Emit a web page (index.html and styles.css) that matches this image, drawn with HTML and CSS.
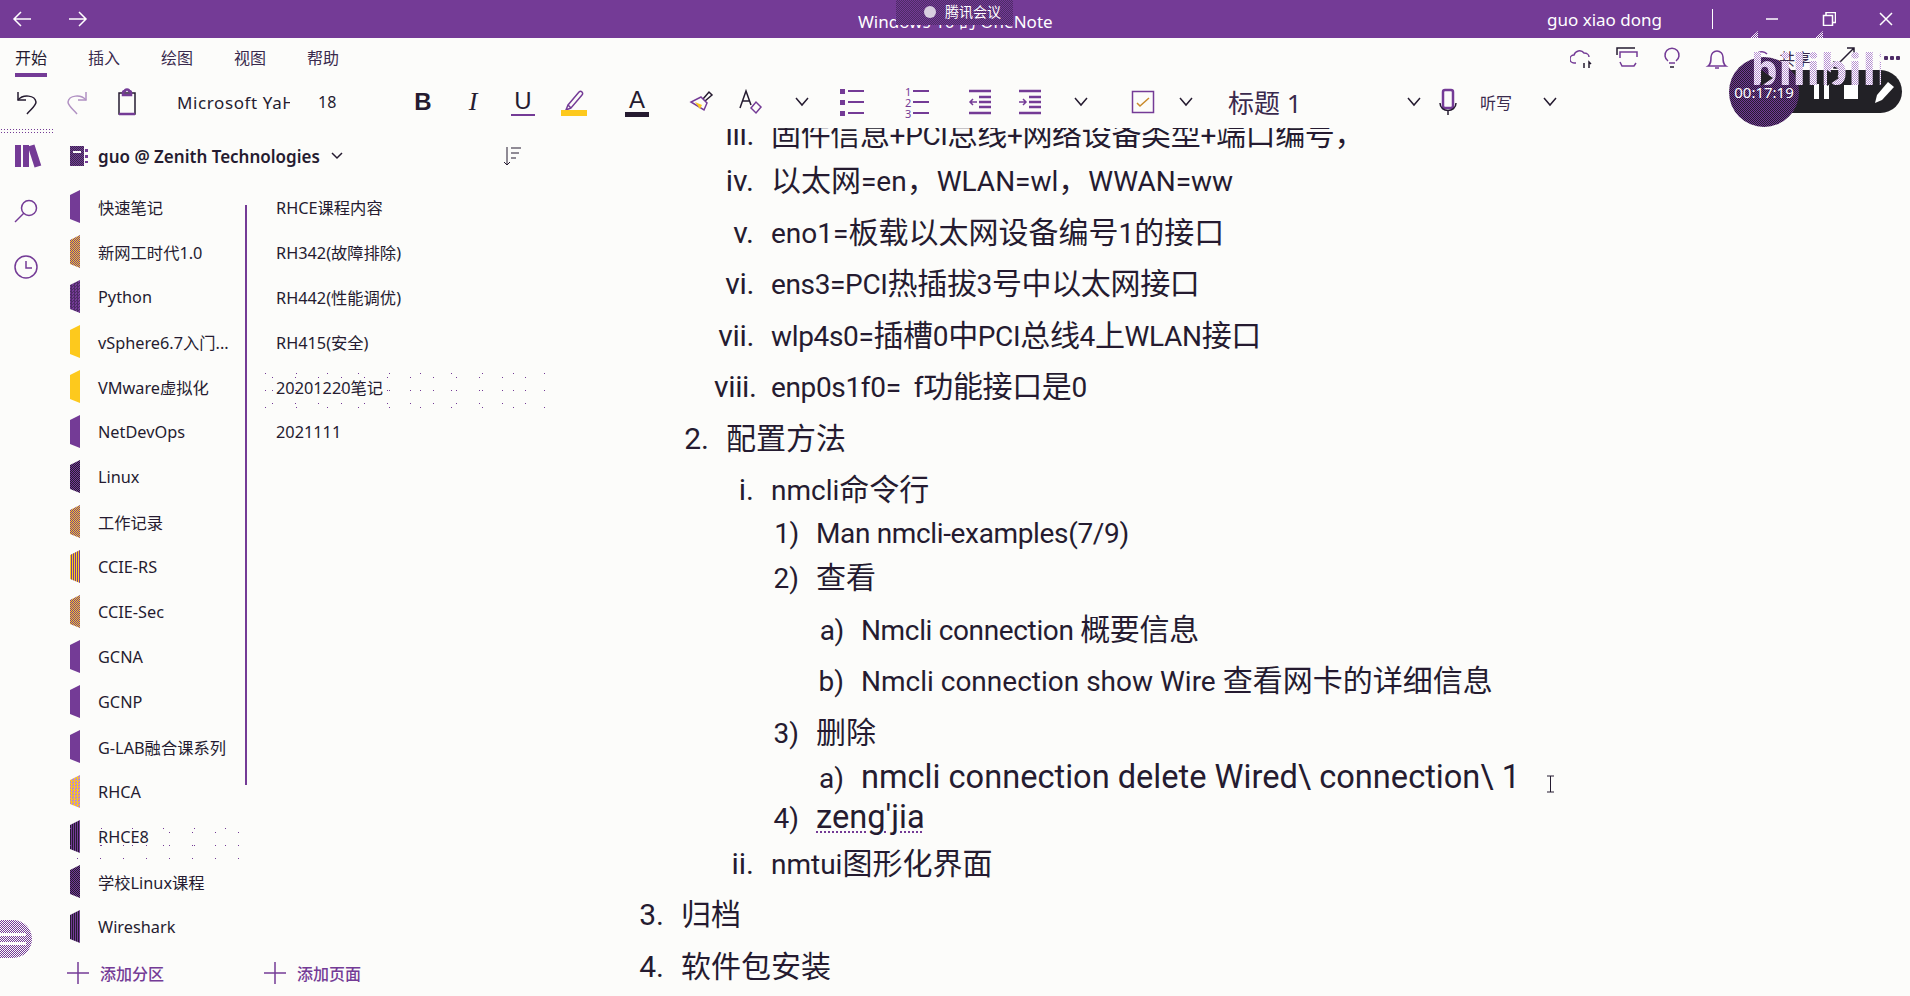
FILE: index.html
```html
<!DOCTYPE html>
<html lang="zh-CN">
<head>
  <meta charset="UTF-8">
  <title>Windows 10 的 OneNote</title>
  <link rel="stylesheet" href="styles.css">
</head>
<body>
  <header class="titlebar">
    <div class="nav-arrows">
      <svg width="24" height="20" viewBox="0 0 24 20"><path d="M20 10H3M10 3l-7 7 7 7"/></svg>
      <svg width="24" height="20" viewBox="0 0 24 20"><path d="M3 10h17M13 3l7 7-7 7"/></svg>
    </div>
    <div class="app-title">Windows 10 的 OneNote</div>
    <div class="user">guo xiao dong</div>
    <div class="sep"></div>
    <div class="win-btns">
      <svg width="14" height="14" viewBox="0 0 14 14"><path d="M1 7h12"/></svg>
      <svg width="14" height="14" viewBox="0 0 14 14"><path d="M1.5 3.5h9v10h-9zM4 3.5V.5h9.5v10h-3"/></svg>
      <svg width="14" height="14" viewBox="0 0 14 14"><path d="M1 1l12 12M13 1L1 13"/></svg>
    </div>
    <div class="meeting"><span class="meeting-dot"></span>腾讯会议</div>
  </header>

  <div class="tabs">
    <a class="tab active">开始</a>
    <a class="tab">插入</a>
    <a class="tab">绘图</a>
    <a class="tab">视图</a>
    <a class="tab">帮助</a>
    <div class="tab-icons">
      <svg class="ic" width="24" height="24" viewBox="0 0 24 24"><path d="M6 17H4a4 4 0 0 1 0-8c1-4 7-6 10-2 3 0 5 2 5 4"/><path class="dk" d="M14 22v-5M19 22v-6l2 2"/></svg>
      <svg class="ic" width="24" height="24" viewBox="0 0 24 24"><path class="dk" d="M2 9V2h18"/><path d="M5 12V6h17v5M5 16l2 4h12l2-3"/></svg>
      <svg class="ic" width="24" height="24" viewBox="0 0 24 24"><path d="M8 15a7 7 0 1 1 8 0M9 17h6"/><path class="dk" d="M10 21h4"/></svg>
      <svg class="ic" width="24" height="24" viewBox="0 0 24 24"><path d="M3 20c3-2 3-5 3-9a6 6 0 0 1 12 0c0 4 0 7 3 9zM10 22h4"/></svg>
      <svg class="ic" width="24" height="24" viewBox="0 0 24 24"><path d="M5 20V11a7 7 0 0 1 12-3"/></svg>
      <span class="share">共享</span>
      <svg class="ic" width="24" height="24" viewBox="0 0 24 24"><path class="dk" d="M2 22L22 2M15 2h7v7M2 15v7h7"/></svg>
      <span class="more"></span>
    </div>
  </div>

  <div class="toolbar">
    <svg class="btn" width="24" height="26" viewBox="0 0 24 26"><path class="dk" d="M3 3v8h8"/><path class="dk" d="M3 11c5-6 17-5 18 2 0 4-6 8-9 12"/></svg>
    <svg class="btn faint" width="24" height="26" viewBox="0 0 24 26"><path d="M21 3v8h-8"/><path d="M21 11C16 5 4 6 3 13c0 4 6 8 9 12"/></svg>
    <svg class="btn" width="24" height="28" viewBox="0 0 24 28"><path class="dk" d="M4 5h16v21H4z"/><path d="M8 5c0-2 2-2 2-2 0-2 4-2 4 0 0 0 2 0 2 2v2H8zM4 26h16" class="fat"/></svg>
    <div class="font-name">Microsoft YaHei UI</div>
    <div class="font-size">18</div>
    <b class="tb tb-b">B</b>
    <i class="tb tb-i">I</i>
    <span class="tb tb-u">U</span>
    <svg class="btn" width="26" height="28" viewBox="0 0 26 28"><path d="M7 17L18 4c2-2 5 1 3 3L10 20zM7 17l-2 5 5-2"/><rect class="yellow" x="0" y="22" width="26" height="6"/></svg>
    <span class="tb tb-a">A</span>
    <svg class="btn" width="26" height="26" viewBox="0 0 26 26"><path class="dk" d="M15 10l6-7 3 3-7 6"/><path d="M13 8l6 6-3 7L3 13z"/><path class="yellow" d="M7 13l7 3-2 4z"/></svg>
    <svg class="btn" width="26" height="26" viewBox="0 0 26 26"><path class="dk" d="M1 19L7 2l5 14M3 12h8"/><path d="M12 19l5-6 5 5-5 6z"/></svg>
    <svg class="btn chev" width="24" height="12" viewBox="0 0 24 12"><path class="dk" d="M6 2l6 7 6-7"/></svg>
    <div class="btn list-ic"><span></span><span></span><span></span></div>
    <div class="btn list-ic num-ic"><span>1</span><span>2</span><span>3</span></div>
    <svg class="btn" width="24" height="26" viewBox="0 0 24 26"><path class="fat" d="M1 2h22M11 8h12M11 13h12M11 18h12M1 24h22"/><path d="M9 13H2M5 10l-3 3 3 3"/></svg>
    <svg class="btn" width="24" height="26" viewBox="0 0 24 26"><path class="fat" d="M1 2h22M11 8h12M11 13h12M11 18h12M1 24h22"/><path d="M1 13h7M5 10l3 3-3 3"/></svg>
    <svg class="btn chev" width="24" height="12" viewBox="0 0 24 12"><path class="dk" d="M6 2l6 7 6-7"/></svg>
    <svg class="btn" width="24" height="24" viewBox="0 0 24 24"><path d="M1.500 1.500h21v21h-21z"/><path class="check" d="M6 13l3 3 9-8"/></svg>
    <svg class="btn chev" width="24" height="12" viewBox="0 0 24 12"><path class="dk" d="M6 2l6 7 6-7"/></svg>
    <div class="style-name">标题 1</div>
    <svg class="btn chev" width="24" height="12" viewBox="0 0 24 12"><path class="dk" d="M6 2l6 7 6-7"/></svg>
    <svg class="btn" width="24" height="28" viewBox="0 0 24 28"><rect class="fat" x="7" y="2" width="10" height="18" rx="2"/><path class="dk" d="M4 15c0 10 16 10 16 0M12 22v5"/></svg>
    <div class="dictate">听写</div>
    <svg class="btn chev" width="24" height="12" viewBox="0 0 24 12"><path class="dk" d="M6 2l6 7 6-7"/></svg>
  </div>

  <main class="workspace">
    <nav class="rail">
      <div class="rail-noise"></div>
      <div class="books"><span></span><span></span><span></span></div>
      <svg class="ic rail-ic" width="26" height="26" viewBox="0 0 26 26"><circle cx="16" cy="10" r="7.5"/><path d="M11 15L2 24"/></svg>
      <svg class="ic rail-ic" width="26" height="26" viewBox="0 0 26 26"><circle cx="13" cy="13" r="11"/><path d="M13 7v7h6"/></svg>
    </nav>

    <section class="notebook">
      <div class="nb-head">
        <div class="nb-icon"></div>
        <div class="nb-name">guo @ Zenith Technologies</div>
        <svg class="nb-chev" width="14" height="10" viewBox="0 0 14 10"><path d="M2 2l5 5 5-5"/></svg>
        <svg class="nb-sort" width="20" height="22" viewBox="0 0 20 22"><path d="M5 2v18M2 17l3 3 3-3M9 3h10M9 8h8M9 13h5"/></svg>
      </div>
      <div class="nb-lists">
        <ul class="sections">
          <li><span class="sec-tab purple"></span>快速笔记</li>
          <li><span class="sec-tab tan"></span>新网工时代1.0</li>
          <li><span class="sec-tab dots"></span>Python</li>
          <li><span class="sec-tab yellow"></span>vSphere6.7入门...</li>
          <li><span class="sec-tab yellow"></span>VMware虚拟化</li>
          <li><span class="sec-tab purple"></span>NetDevOps</li>
          <li><span class="sec-tab dark"></span>Linux</li>
          <li><span class="sec-tab tan"></span>工作记录</li>
          <li><span class="sec-tab stripe"></span>CCIE-RS</li>
          <li><span class="sec-tab tan"></span>CCIE-Sec</li>
          <li><span class="sec-tab purple"></span>GCNA</li>
          <li><span class="sec-tab purple"></span>GCNP</li>
          <li><span class="sec-tab purple"></span>G-LAB融合课系列</li>
          <li><span class="sec-tab pale"></span>RHCA</li>
          <li><span class="sec-tab dark-stripe"></span>RHCE8</li>
          <li><span class="sec-tab dark"></span>学校Linux课程</li>
          <li><span class="sec-tab dark-stripe"></span>Wireshark</li>
        </ul>
        <div class="scrollbar"></div>
        <ul class="pages">
          <li>RHCE课程内容</li>
          <li>RH342(故障排除)</li>
          <li>RH442(性能调优)</li>
          <li>RH415(安全)</li>
          <li>20201220笔记</li>
          <li>2021111</li>
        </ul>
        <div class="noise noise-pages"></div>
        <div class="noise noise-sections"></div>
      </div>
      <div class="nb-foot">
        <div class="add add-section"><svg width="22" height="22" viewBox="0 0 22 22"><path d="M11 0v22M0 11h22"/></svg>添加分区</div>
        <div class="add"><svg width="22" height="22" viewBox="0 0 22 22"><path d="M11 0v22M0 11h22"/></svg>添加页面</div>
      </div>
    </section>

    <article class="note">
      <div class="row lv3 first squeeze"><span class="num">iii.</span><span class="zh">固件信息</span>+PCI<span class="zh">总线</span>+<span class="zh">网络设备类型</span>+<span class="zh">端口编号，</span></div>
      <div class="row lv3 after-first"><span class="num">iv.</span><span class="zh">以太网</span>=en<span class="zh">，</span>WLAN=wl<span class="zh">，</span>WWAN=ww</div>
      <div class="row lv3"><span class="num">v.</span>eno1=<span class="zh">板载以太网设备编号</span>1<span class="zh">的接口</span></div>
      <div class="row lv3 squeeze"><span class="num">vi.</span>ens3=PCI<span class="zh">热插拔</span>3<span class="zh">号中以太网接口</span></div>
      <div class="row lv3 squeeze"><span class="num">vii.</span>wlp4s0=<span class="zh">插槽</span>0<span class="zh">中</span>PCI<span class="zh">总线</span>4<span class="zh">上</span>WLAN<span class="zh">接口</span></div>
      <div class="row lv3 squeeze"><span class="num">viii.</span>enp0s1f0=&nbsp; f<span class="zh">功能接口是</span>0</div>
      <div class="row lv2"><span class="num">2.</span><span class="zh">配置方法</span></div>
      <div class="row lv3"><span class="num">i.</span>nmcli<span class="zh">命令行</span></div>
      <div class="row lv4 near squeeze"><span class="num">1)</span>Man nmcli-examples(7/9)</div>
      <div class="row lv4 near"><span class="num">2)</span><span class="zh">查看</span></div>
      <div class="row lv5 squeeze"><span class="num">a)</span>Nmcli connection <span class="zh">概要信息</span></div>
      <div class="row lv5"><span class="num">b)</span>Nmcli connection show Wire <span class="zh">查看网卡的详细信息</span></div>
      <div class="row lv4"><span class="num">3)</span><span class="zh">删除</span></div>
      <div class="row lv5 near"><span class="num">a)</span><span class="big">nmcli connection delete Wired\ connection\ 1</span></div>
      <div class="row lv4 nearest"><span class="num">4)</span><span class="big spell">zeng'jia</span></div>
      <div class="row lv3 after-spell"><span class="num">ii.</span>nmtui<span class="zh">图形化界面</span></div>
      <div class="row lv1"><span class="num">3.</span><span class="zh">归档</span></div>
      <div class="row lv1"><span class="num">4.</span><span class="zh">软件包安装</span></div>
    </article>
  </main>

  <div class="recorder">
    <div class="rec-pill">
      <span class="rec-pause"></span>
      <span class="rec-stop"></span>
      <svg width="22" height="26" viewBox="0 0 22 26"><path d="M2 24l2-8L15 3l6 5L9 21z"/></svg>
    </div>
    <div class="rec-circle">00:17:19</div>
    <div class="watermark">bilibili</div>
    <span class="wm-play wm-play-a"></span>
    <span class="wm-play wm-play-b"></span>
    <span class="wm-wedge wm-wedge-a"></span>
    <span class="wm-wedge wm-wedge-b"></span>
  </div>

  <div class="float-btn"><span></span><span></span></div>
  <svg class="ibeam" width="9" height="18" viewBox="0 0 9 18"><path d="M1 1h7M4.500 1v16M1 17h7"/></svg>
</body>
</html>
```

FILE: styles.css
```css
* {
  box-sizing: border-box;
}
html, body {
  margin: 0;
  height: 100%;
}
body {
  width: 1910px;
  height: 996px;
  overflow: hidden;
  position: relative;
  display: flex;
  flex-direction: column;
  background: #fcfcfa;
  color: #251b30;
  font-family: "Noto Sans", "Noto Sans CJK SC", sans-serif;
  font-size: 16px;
}
ul {
  list-style: none;
  margin: 0;
  padding: 0;
}
svg {
  display: block;
  fill: none;
  stroke: #743b96;
  stroke-width: 1.5;
}
svg .dk {
  stroke: #251b30;
}
svg .fat {
  stroke-width: 2.5;
}
svg .yellow {
  fill: #fdc91d;
  stroke: none;
}
svg .check {
  stroke: #c98a2a;
}

/* title bar */
.titlebar {
  height: 38px;
  flex: none;
  position: relative;
  display: flex;
  align-items: center;
  background: #743b96;
  color: #fff;
  font-size: 17px;
}
.titlebar svg {
  stroke: #fff;
}
.nav-arrows {
  display: flex;
  gap: 31px;
  padding-left: 11px;
}
.app-title {
  position: absolute;
  left: 858px;
  top: 8px;
  white-space: nowrap;
}
.user {
  margin-left: auto;
}
.sep {
  width: 1px;
  height: 20px;
  margin-left: 50px;
  background: #fff;
}
.win-btns {
  display: flex;
  gap: 43px;
  margin-left: 52px;
  padding-right: 17px;
}
.meeting {
  position: absolute;
  left: 896px;
  top: 0;
  width: 117px;
  height: 25px;
  padding-left: 49px;
  background: repeating-conic-gradient(#4d2b66 0 25%, #743b96 0 50%) 0 0 / 2px 2px;
  font-size: 14px;
  line-height: 23px;
  white-space: nowrap;
}
.meeting-dot {
  position: absolute;
  left: 28px;
  top: 6px;
  width: 12px;
  height: 12px;
  border-radius: 50%;
  background: #d8cfe0;
}

/* ribbon tabs */
.tabs {
  height: 40px;
  flex: none;
  display: flex;
  align-items: flex-start;
  gap: 41px;
  padding-left: 15px;
}
.tab {
  height: 39px;
  padding-top: 8px;
  font-size: 16px;
  line-height: 24px;
  color: #3a2a4d;
}
.tab.active {
  border-bottom: 4px solid #743b96;
  color: #251b30;
}
.tab-icons {
  display: flex;
  align-items: center;
  gap: 21px;
  height: 40px;
  margin-left: auto;
  padding-right: 9px;
}
.share {
  margin-left: -16px;
  font-size: 16px;
  color: #3a2a4d;
}
.more {
  width: 18px;
  height: 4px;
  margin-left: 6px;
  background: radial-gradient(circle, #4d2b66 2px, transparent 2.5px) 0 0 / 6px 4px;
}

/* formatting row */
.toolbar {
  height: 50px;
  flex: none;
  display: grid;
  grid-template-columns: 50px 50px 62px 141px 93px 50px 50px 50px 64px 63px 51px 51px 50px 65px 63px 50px 51px 62px 43px 54px 174px 34px 44px 58px 24px;
  align-items: center;
  padding-left: 15px;
  padding-bottom: 2px;
}
.faint {
  opacity: 0.55;
}
.font-name {
  width: 113px;
  overflow: hidden;
  white-space: nowrap;
  font-size: 17px;
  letter-spacing: 0.6px;
}
.font-size {
  font-size: 16px;
}
.tb {
  width: 24px;
  text-align: center;
  font-family: "Liberation Sans", sans-serif;
  font-size: 24px;
  line-height: 28px;
}
.tb-b {
  font-weight: bold;
}
.tb-i {
  font-family: "Liberation Serif", serif;
  font-size: 26px;
}
.tb-u {
  border-bottom: 2px solid #743b96;
  line-height: 26px;
}
.tb-a {
  border-bottom: 5px solid #251b30;
  line-height: 24px;
}
.list-ic {
  width: 24px;
  display: flex;
  flex-direction: column;
  gap: 6px;
}
.list-ic span {
  position: relative;
  height: 5px;
  font-size: 11px;
  line-height: 5px;
  color: #743b96;
}
.list-ic span::before {
  content: "";
  position: absolute;
  left: 8px;
  right: 0;
  top: 1.5px;
  height: 2px;
  background: #743b96;
}
.list-ic span::after {
  content: "";
  position: absolute;
  left: 0;
  top: 0;
  width: 5px;
  height: 5px;
  background: #743b96;
}
.num-ic span::after {
  display: none;
}
.style-name {
  font-size: 26px;
  color: #3a2a4d;
  white-space: nowrap;
}
.dictate {
  font-size: 16px;
  color: #3a2a4d;
}

/* main area */
.workspace {
  flex: 1;
  min-height: 0;
  display: flex;
}
.rail {
  width: 52px;
  flex: none;
  position: relative;
  display: flex;
  flex-direction: column;
  align-items: center;
  padding-top: 17px;
}
.rail-noise {
  position: absolute;
  left: 0;
  top: 0;
  width: 55px;
  height: 5px;
  background: radial-gradient(circle, #743b96 0.8px, transparent 1px) 0 0 / 3px 3px;
}
.books {
  display: flex;
  gap: 2px;
  height: 22px;
  margin-bottom: 31px;
}
.books span {
  width: 6px;
  background: #743b96;
}
.books span:last-child {
  width: 7px;
  transform: rotate(-18deg);
}
.rail-ic {
  margin-bottom: 30px;
}
.notebook {
  width: 548px;
  flex: none;
  display: flex;
  flex-direction: column;
}
.nb-head {
  height: 56px;
  flex: none;
  display: flex;
  align-items: center;
  padding-left: 18px;
}
.nb-icon {
  position: relative;
  width: 14px;
  height: 20px;
  margin-right: 14px;
  background: repeating-conic-gradient(#743b96 0 25%, #3a2a4d 0 50%) 0 0 / 2px 2px;
}
.nb-icon::before {
  content: "";
  position: absolute;
  left: 3px;
  top: 5px;
  width: 8px;
  height: 2px;
  background: #fcfcfa;
}
.nb-icon::after {
  content: "";
  position: absolute;
  left: 15px;
  top: 3px;
  width: 3px;
  height: 14px;
  background: repeating-linear-gradient(#743b96 0 3px, transparent 3px 6px);
}
.nb-name {
  font-weight: 600;
  font-size: 17px;
  white-space: nowrap;
}
.nb-chev {
  margin-left: 10px;
  stroke: #251b30;
}
.nb-sort {
  margin-left: 158px;
  stroke: #251b30;
  stroke-width: 1;
}
.nb-lists {
  flex: 1;
  min-height: 0;
  position: relative;
  display: flex;
}
.sections {
  width: 196px;
  flex: none;
}
.sections li,
.pages li {
  height: 45px;
  display: flex;
  align-items: center;
  font-size: 16.300px;
  white-space: nowrap;
}
.sec-tab {
  width: 10px;
  height: 33px;
  margin: 0 18px;
  clip-path: polygon(0 15%, 100% 0, 100% 100%, 0 88%);
}
.purple {
  background: #743b96;
}
.yellow {
  background: #fdc91d;
}
.tan {
  background: repeating-conic-gradient(#743b96 0 25%, #fdc91d 0 50%) 0 0 / 2px 2px;
}
.pale {
  background: repeating-conic-gradient(#fdc91d 0 25%, #b884d6 0 50%) 0 0 / 3px 3px;
}
.dots {
  background: repeating-conic-gradient(#4d2b66 0 25%, #743b96 0 50%) 0 0 / 3px 3px;
}
.dark {
  background: repeating-conic-gradient(#251b30 0 25%, #743b96 0 50%) 0 0 / 2px 2px;
}
.stripe {
  background: repeating-linear-gradient(90deg, #fdc91d 0 1px, #743b96 1px 2px);
}
.dark-stripe {
  background: repeating-linear-gradient(90deg, #251b30 0 1px, #743b96 1px 2px);
}
.scrollbar {
  position: absolute;
  left: 193px;
  top: 21px;
  width: 2px;
  height: 580px;
  background: #743b96;
}
.pages {
  padding-left: 28px;
}
.noise {
  position: absolute;
  pointer-events: none;
  background-image:
    radial-gradient(circle, #743b96 0.7px, transparent 1px),
    radial-gradient(circle, #743b96 0.7px, transparent 1px);
  background-size: 31px 17px, 23px 13px;
  background-position: 0 0, 11px 6px;
}
.noise-pages {
  left: 198px;
  top: 181px;
  width: 295px;
  height: 46px;
}
.noise-sections {
  left: 3px;
  top: 636px;
  width: 196px;
  height: 42px;
}
.nb-foot {
  height: 47px;
  flex: none;
  display: flex;
  align-items: center;
  padding-left: 15px;
  color: #743b96;
  font-weight: 500;
}
.add {
  display: flex;
  align-items: center;
  gap: 11px;
}
.add-section {
  width: 197px;
}

/* page content: latin runs sit a little smaller than the chinese ones */
.note {
  flex: 1;
  min-width: 0;
  overflow: hidden;
  font-family: Roboto, "Noto Sans CJK SC", sans-serif;
  font-size: 28px;
}
.row {
  height: 40px;
  margin-top: 11.500px;
  line-height: 40px;
  white-space: nowrap;
}
.num {
  display: inline-block;
  width: 40px;
  margin-right: 17px;
  font-size: 30px;
  text-align: right;
}
.lv4 .num,
.lv5 .num {
  margin-right: 17px;
  font-size: 28px;
}
.zh {
  font-size: 30px;
}
.big {
  font-size: 32.600px;
}
.squeeze {
  letter-spacing: -0.350px;
}
.row.first {
  margin-top: -13px;
}
.row.after-first {
  margin-top: 6px;
}
.row.near {
  margin-top: 4px;
}
.row.nearest {
  margin-top: 0;
}
.row.after-spell {
  margin-top: 7px;
}
.lv1 {
  padding-left: 24px;
}
.lv2 {
  padding-left: 69px;
}
.lv3 {
  padding-left: 114px;
}
.lv4 {
  padding-left: 159px;
}
.lv5 {
  padding-left: 204px;
}
.spell {
  text-decoration: underline dotted #743b96 2px;
  text-underline-offset: 4px;
}

/* screen recorder overlay */
.recorder {
  position: absolute;
  left: 1729px;
  top: 30px;
  width: 175px;
  height: 100px;
}
.rec-pill {
  position: absolute;
  left: 35px;
  top: 40px;
  width: 138px;
  height: 43px;
  display: flex;
  align-items: center;
  gap: 15px;
  padding-left: 50px;
  border-radius: 0 22px 22px 0;
  background: #222126;
}
.rec-pill svg {
  fill: #fff;
  stroke: none;
}
.rec-pause {
  width: 15px;
  height: 15px;
  border-left: 5px solid #fff;
  border-right: 5px solid #fff;
}
.rec-stop {
  width: 14px;
  height: 14px;
  background: #fff;
}
.rec-circle {
  position: absolute;
  left: 0;
  top: 27px;
  width: 70px;
  height: 70px;
  border-radius: 50%;
  background: repeating-conic-gradient(#743b96 0 25%, #251b30 0 50%) 0 0 / 2px 2px;
  color: #fff;
  font-size: 15px;
  line-height: 70px;
  text-align: center;
  white-space: nowrap;
}
.watermark {
  position: absolute;
  left: 22px;
  top: 15px;
  width: 130px;
  height: 46px;
  overflow: hidden;
  background: repeating-conic-gradient(#fff 0 25%, #b58fd0 0 50%) 0 0 / 2px 2px;
  -webkit-background-clip: text;
  background-clip: text;
  color: transparent;
  font-size: 42px;
  font-weight: 800;
  line-height: 48px;
  letter-spacing: 1px;
}
.wm-play {
  position: absolute;
  top: 40px;
  width: 12px;
  height: 16px;
  background: #222126;
  clip-path: polygon(0 0, 100% 50%, 0 100%);
}
.wm-play-a {
  left: 32px;
}
.wm-play-b {
  left: 98px;
}
.wm-wedge {
  position: absolute;
  top: 1px;
  width: 8px;
  height: 7px;
  background: repeating-conic-gradient(#fff 0 25%, #743b96 0 50%) 0 0 / 2px 2px;
  clip-path: polygon(0 100%, 100% 0, 100% 100%);
}
.wm-wedge-a {
  left: 21px;
}
.wm-wedge-b {
  left: 86px;
}
.float-btn {
  position: absolute;
  left: 0;
  top: 920px;
  width: 32px;
  height: 38px;
  display: flex;
  flex-direction: column;
  justify-content: center;
  gap: 6px;
  padding: 0 6px 0 0;
  border-radius: 0 19px 19px 0;
  background: repeating-conic-gradient(#743b96 0 25%, #fcfcfa 0 50%) 0 0 / 2px 2px;
}
.float-btn span {
  height: 3px;
  background: #fcfcfa;
}
.ibeam {
  position: absolute;
  left: 1546px;
  top: 775px;
  stroke: #251b30;
  stroke-width: 1;
}
```
